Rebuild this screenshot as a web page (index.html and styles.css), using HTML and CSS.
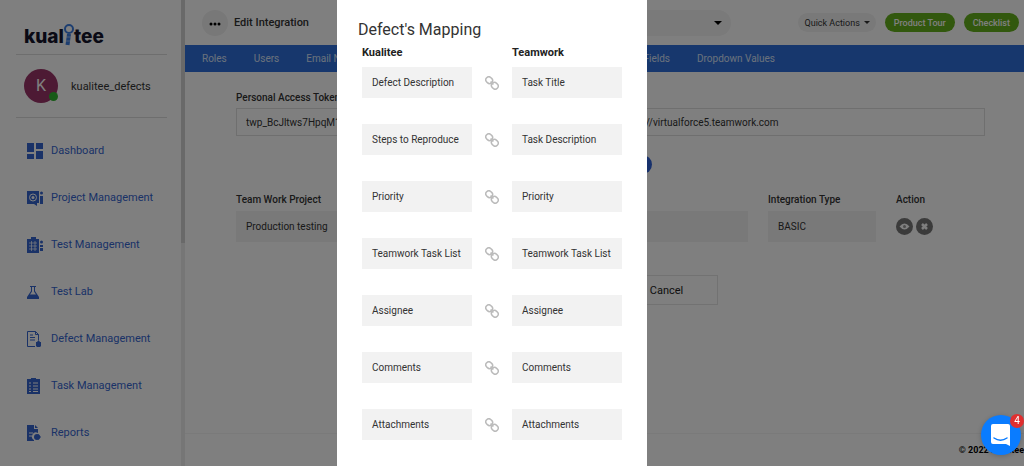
FILE: index.html
```html
<!DOCTYPE html>
<html lang="en">

<head>
    <meta charset="UTF-8">
    <meta name="viewport" content="width=device-width, initial-scale=1.0">
    <title>Edit Integration - Kualitee</title>
    <link rel="stylesheet" href="styles.css">
</head>

<body>

    <div class="page">
        <aside class="sidebar">
            <div class="sidebar-content">
                <a class="logo" href="#" aria-label="kualitee">
                    <span>kual</span>
                    <svg class="logo-i" viewBox="0 0 10 24" width="10" height="24">
                        <circle cx="5" cy="6" r="4" fill="none" stroke="#3b7de0" stroke-width="2" />
                        <path d="M5 11 L3.500 22" stroke="#3b7de0" stroke-width="4" />
                        <path d="M2 14h5M1.500 18h5" stroke="#fff" stroke-width="1" opacity=".5" />
                    </svg>
                    <span>tee</span>
                </a>
                <div class="user">
                    <div class="avatar">K<span class="status"></span></div>
                    <span>kualitee_defects</span>
                </div>
                <nav>
                    <ul class="menu">
                        <li><a href="#">
                            <svg viewBox="0 0 16 16" fill="currentColor"><path d="M0 0h7v9H0zM9 0h7v6H9zM0 11h7v5H0zM9 8h7v8H9z" /></svg>
                            Dashboard</a></li>
                        <li><a href="#">
                            <svg viewBox="0 0 16 16" fill="currentColor"><path d="M0 1h12v12h-2v3l-3-2H0z" /><circle cx="6" cy="7.500" r="3.500" fill="none" stroke="#fff" stroke-width="1" /><circle cx="6" cy="7.500" r="1.500" fill="#fff" /><circle cx="14.500" cy="3" r="1.500" /><path d="M13 6h3v8h-3z" /><path d="M12.500 4.500v9" stroke="#fff" /></svg>
                            Project Management</a></li>
                        <li><a href="#">
                            <svg viewBox="0 0 16 16" fill="currentColor"><path d="M0 2h4V0h5v2h3v14H0z" /><path d="M2 6h8M2 9h8M2 12h8M4.500 4v10M8 4v10" stroke="#fff" stroke-width=".7" /><circle cx="14.500" cy="5" r="1.500" /><path d="M13 8h3v2h-3zM13 11h3v3h-3z" /></svg>
                            Test Management</a></li>
                        <li><a href="#">
                            <svg viewBox="0 0 16 16" fill="currentColor"><path d="M3 2h6v1H8v4l4 6v2H0v-2l4-6V3H3zM5 3v4.500L3 10.500h6L7 7.500V3z" fill-rule="evenodd" /></svg>
                            Test Lab</a></li>
                        <li><a href="#">
                            <svg viewBox="0 0 16 16" fill="currentColor"><path d="M.500 .500h8l3 3V9M.500 .500v15H8M8.500 .500v3h3M3 4h3M3 6.500h5M3 9h5" fill="none" stroke="currentColor" /><path d="M9 11h1l1.500-2 1.500 2h1v4l-1 1h-3l-1-1z" /></svg>
                            Defect Management</a></li>
                        <li><a href="#">
                            <svg viewBox="0 0 16 16" fill="currentColor"><path d="M0 1h4V0h5v1h4v15H0z" /><path d="M2 5h2M2 8h2M2 11h2M2 13.500h2M6 5h5M6 8h5M6 11h5M6 13.500h5" stroke="#fff" stroke-width="1" /></svg>
                            Task Management</a></li>
                        <li><a href="#">
                            <svg viewBox="0 0 16 16" fill="currentColor"><path d="M0 0h7v4h4v4a4 4 0 0 0-4 7v1H0z" /><path d="M8 0l3 3H8z" /><path d="M2 8h4M2 11h3" stroke="#fff" /><circle cx="10" cy="12" r="3" /><path d="M11 9l3 3-3 3z" /></svg>
                            Reports</a></li>
                    </ul>
                </nav>
            </div>
            <div class="scrollbar"><div class="scrollbar-thumb"></div></div>
        </aside>

        <main class="main">
            <header class="topbar">
                <button class="more" type="button" aria-label="More">
                    <svg viewBox="0 0 12 4" width="12" height="4"><circle cx="2" cy="2" r="1.500" /><circle cx="6" cy="2" r="1.500" /><circle cx="10" cy="2" r="1.500" /></svg>
                </button>
                <h1>Edit Integration</h1>
                <div class="project-picker">
                    <select aria-label="Project"><option></option></select>
                </div>
                <button class="pill" type="button">Quick Actions <span class="caret"></span></button>
                <button class="pill pill-green" type="button">Product Tour</button>
                <button class="pill pill-green" type="button">Checklist</button>
            </header>

            <nav class="tabs">
                <a href="#">Roles</a>
                <a href="#">Users</a>
                <a href="#">Email Notifications</a>
                <a class="tabs-fields" href="#">Custom Fields</a>
                <a href="#">Dropdown Values</a>
            </nav>

            <form class="content">
                <div class="fields">
                    <div class="field">
                        <label for="token">Personal Access Token*</label>
                        <input type="text" id="token" value="twp_BcJltws7HpqM1h">
                    </div>
                    <div class="field">
                        <label for="url">URL*</label>
                        <input type="text" id="url" value="https://virtualforce5.teamwork.com">
                    </div>
                </div>
                <div class="validate">
                    <button type="button">Validate</button>
                </div>
                <table class="projects">
                    <thead>
                        <tr>
                            <th>Team Work Project</th>
                            <th></th>
                            <th class="col-type">Integration Type</th>
                            <th class="col-action">Action</th>
                        </tr>
                    </thead>
                    <tbody>
                        <tr>
                            <td><div class="box">Production testing</div></td>
                            <td><div class="box"></div></td>
                            <td><div class="box">BASIC</div></td>
                            <td>
                                <div class="actions">
                                    <button type="button" aria-label="View">
                                        <svg viewBox="0 0 17 17"><path d="M3.500 8.500q5-6 10 0q-5 6-10 0z" fill="#fff" /><circle cx="8.500" cy="8.500" r="1.500" fill="#999" /></svg>
                                    </button>
                                    <button type="button" aria-label="Remove">
                                        <svg viewBox="0 0 17 17"><path d="M6 6l5 5M11 6l-5 5" stroke="#fff" stroke-width="2.500" /></svg>
                                    </button>
                                </div>
                            </td>
                        </tr>
                    </tbody>
                </table>
                <div class="form-buttons">
                    <button class="save" type="button">Save</button>
                    <button type="button">Cancel</button>
                </div>
            </form>

            <footer>© 2022 Kualitee</footer>
        </main>
    </div>

    <div class="backdrop">
        <div class="modal" role="dialog" aria-labelledby="modalTitle">
            <h2 id="modalTitle">Defect's Mapping</h2>
            <table class="mapping">
                <thead>
                    <tr>
                        <th>Kualitee</th>
                        <th class="col-link"></th>
                        <th>Teamwork</th>
                    </tr>
                </thead>
                <tbody id="mappingRows"></tbody>
            </table>
        </div>
    </div>

    <button class="chat" type="button" aria-label="Open chat">
        <svg viewBox="0 0 20 22" width="20" height="22">
            <path d="M2 0h15a2 2 0 0 1 2 2v20l-4-2H2a2 2 0 0 1-2-2V2a2 2 0 0 1 2-2z" fill="#fff" />
            <path d="M3 14q6.500 4.500 13 0" fill="none" stroke="#0a7cff" stroke-width="1.500" stroke-linecap="round" />
        </svg>
        <span class="chat-badge">4</span>
    </button>

    <script>
        const mapping = [
            ["Defect Description", "Task Title"],
            ["Steps to Reproduce", "Task Description"],
            ["Priority", "Priority"],
            ["Teamwork Task List", "Teamwork Task List"],
            ["Assignee", "Assignee"],
            ["Comments", "Comments"],
            ["Attachments", "Attachments"]
        ];

        const linkIcon = `<svg viewBox="0 0 14 14" width="14" height="14" fill="none" stroke="#bbb" stroke-width="1.500">
            <g transform="rotate(45 7 7)">
                <rect x="-.5" y="4" width="7" height="6" rx="3" />
                <rect x="7.500" y="4" width="7" height="6" rx="3" />
                <path d="M5 7h4" />
            </g>
        </svg>`;

        document.getElementById("mappingRows").innerHTML = mapping.map(row => `<tr>
            <td><div class="box">${row[0]}</div></td>
            <td class="link">${linkIcon}</td>
            <td><div class="box">${row[1]}</div></td>
        </tr>`).join("");
    </script>

</body>

</html>
```
FILE: styles.css
```css
* {
    box-sizing: border-box;
}

body {
    margin: 0;
    font-family: Roboto, Arial, sans-serif;
    font-size: 10px;
    color: #333;
    background: #fff;
    overflow: hidden;
}

button,
input,
select {
    font-family: inherit;
    font-size: inherit;
    color: inherit;
    margin: 0;
}

button {
    border: 0;
    padding: 0;
}

a {
    color: inherit;
    text-decoration: none;
}

.page {
    display: flex;
    height: 100vh;
}

/* sidebar */
.sidebar {
    display: flex;
    width: 185px;
    flex-shrink: 0;
}

.sidebar-content {
    flex: 1;
    padding: 21px 14px 0 16px;
}

.scrollbar {
    width: 4px;
    background: #ececec;
}

.scrollbar-thumb {
    height: 243px;
    background: #d2d2d2;
}

.logo {
    display: flex;
    align-items: flex-end;
    height: 34px;
    padding: 0 8px 7px;
    border-bottom: 1px solid #dcdcdc;
    font-family: Inter, sans-serif;
    font-size: 19px;
    font-weight: 800;
    line-height: 20px;
    color: #14142b;
}

.logo-i {
    flex-shrink: 0;
}

.user {
    display: flex;
    align-items: center;
    gap: 13px;
    height: 63px;
    padding-left: 8px;
    border-bottom: 1px solid #dcdcdc;
    font-size: 11px;
}

.avatar {
    position: relative;
    width: 34px;
    height: 34px;
    border-radius: 50%;
    background: #9a3468;
    color: #fff;
    font-size: 16px;
    line-height: 34px;
    text-align: center;
}

.status {
    position: absolute;
    right: 0;
    bottom: 2px;
    width: 9px;
    height: 9px;
    border-radius: 50%;
    background: #2fb52f;
}

.menu {
    list-style: none;
    margin: 9px 0 0;
    padding: 0 0 0 11px;
    color: #3565cf;
    font-size: 11px;
}

.menu a {
    display: flex;
    align-items: center;
    gap: 8px;
    height: 47px;
    white-space: nowrap;
}

.menu svg {
    width: 16px;
    height: 16px;
    flex-shrink: 0;
}

/* top bar */
.main {
    display: flex;
    flex-direction: column;
    flex: 1;
    min-width: 0;
}

.topbar {
    display: flex;
    align-items: center;
    gap: 6px;
    height: 45px;
    padding: 0 5px 0 17px;
}

.more {
    width: 26px;
    height: 26px;
    border-radius: 50%;
    background: #f0f0f0;
}

.topbar h1 {
    margin: 0;
    font-size: 11px;
    font-weight: 500;
    white-space: nowrap;
}

.project-picker {
    display: grid;
    align-items: center;
    flex: 1;
    margin: 0 58px 0 140px;
}

.project-picker select {
    width: 100%;
    height: 26px;
    padding: 0 10px;
    border: 0;
    border-radius: 13px;
    appearance: none;
    background: #f4f4f4;
}

.project-picker > *,
.project-picker::after {
    grid-area: 1 / 1;
}

.project-picker::after {
    content: "";
    justify-self: end;
    margin-right: 9px;
    border: 4px solid transparent;
    border-top-color: #000;
    border-bottom: 0;
    pointer-events: none;
}

.pill {
    display: flex;
    align-items: center;
    gap: 4px;
    height: 19px;
    margin-left: 3px;
    padding: 0 6px;
    border-radius: 10px;
    background: #f2f2f2;
    font-size: 9px;
    white-space: nowrap;
}

.pill-green {
    padding: 0 9px;
    background: #65b01c;
    color: #fff;
    font-weight: 500;
}

.caret {
    border: 3px solid transparent;
    border-top-color: #333;
    border-bottom: 0;
}

.tabs {
    display: flex;
    align-items: center;
    gap: 27px;
    height: 27px;
    padding: 0 17px;
    background: #2f6fdb;
    color: #d6e2f8;
    white-space: nowrap;
}

.tabs-fields {
    margin-left: auto;
}

.tabs a:last-child {
    margin-right: 232px;
}

/* integration form */
.content {
    flex: 1;
    padding: 19px 39px 0 51px;
}

.fields {
    display: grid;
    grid-template-columns: 1fr 1fr;
}

.field:first-child {
    padding-right: 20px;
}

.field label {
    display: block;
    height: 17px;
    line-height: 13px;
    font-weight: 500;
}

.field input {
    display: block;
    width: 100%;
    height: 28px;
    padding: 0 9px;
    border: 1px solid #dedede;
    background: #fff;
}

.validate {
    display: flex;
    justify-content: center;
    padding: 19px 0;
}

.validate button {
    width: 82px;
    height: 19px;
    border-radius: 10px;
    background: #2f62d8;
    color: #fff;
}

table {
    width: 100%;
    table-layout: fixed;
    border-collapse: collapse;
}

th,
td {
    padding: 0;
    text-align: left;
    vertical-align: top;
}

.box {
    height: 31px;
    padding: 0 10px;
    background: #f2f2f2;
    line-height: 31px;
    white-space: nowrap;
}

.projects th {
    height: 18px;
    line-height: 13px;
    font-weight: 500;
}

.projects .box {
    margin-right: 20px;
}

.col-type {
    width: 128px;
}

.col-action {
    width: 89px;
}

.actions {
    display: flex;
    gap: 3px;
    padding-top: 7px;
}

.actions button {
    width: 17px;
    height: 17px;
    border-radius: 50%;
    background: #777;
}

.actions svg {
    display: block;
}

.form-buttons {
    display: flex;
    justify-content: center;
    gap: 10px;
    padding-top: 33px;
}

.form-buttons button {
    width: 102px;
    height: 30px;
    border: 1px solid #e4e4e4;
    background: #fff;
    font-size: 11px;
    color: #222;
}

.form-buttons .save {
    background: #2f62d8;
    color: #fff;
}

footer {
    height: 33px;
    border-top: 1px solid #f4f4f4;
    font-size: 9px;
    font-weight: 700;
    line-height: 33px;
    text-align: right;
    color: #000;
}

/* mapping modal */
.backdrop {
    position: fixed;
    inset: 0;
    display: flex;
    justify-content: center;
    padding-right: 40px;
    background: rgba(0, 0, 0, .5);
}

.modal {
    width: 310px;
    padding: 20px 25px 0;
    background: #fff;
}

.modal h2 {
    margin: 0 -4px;
    font-size: 16px;
    font-weight: 400;
    line-height: 20px;
}

.mapping th {
    height: 27px;
    padding: 6px 0 0;
    font-size: 11px;
    line-height: 13px;
    color: #222;
}

.mapping .col-link {
    width: 40px;
}

.mapping td {
    height: 57px;
}

.mapping .link {
    padding-top: 9px;
    text-align: center;
}

/* chat launcher */
.chat {
    position: fixed;
    right: 3px;
    bottom: 11px;
    display: flex;
    align-items: center;
    justify-content: center;
    width: 40px;
    height: 40px;
    border-radius: 50%;
    background: #0a7cff;
    box-shadow: 0 1px 5px rgba(0, 0, 0, .2);
}

.chat-badge {
    position: absolute;
    top: -1px;
    right: -3px;
    width: 14px;
    height: 14px;
    border-radius: 50%;
    background: #e02f2f;
    color: #fff;
    line-height: 14px;
}
```
